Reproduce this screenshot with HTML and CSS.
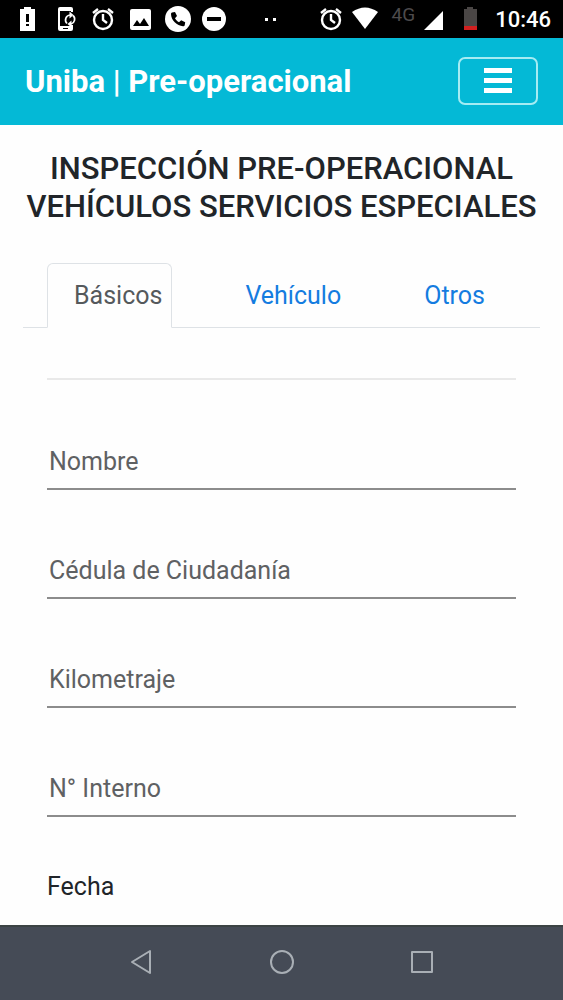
FILE: index.html
```html
<!DOCTYPE html>
<html lang="es">
<head>
<meta charset="utf-8">
<meta name="viewport" content="width=device-width, initial-scale=1">
<title>Uniba | Pre-operacional</title>
<link rel="stylesheet" href="styles.css">
</head>
<body>
<div class="status">
  <div class="status-left">
    <svg class="icon" viewBox="0 0 26 26" aria-hidden="true"><path fill="#fff" d="M5 3h4V1h7v2h4v22H5z"/><path fill="#000" d="M11 8h3v8h-3zM11 18h3v2h-3z"/></svg>
    <svg class="icon" viewBox="0 0 26 26" aria-hidden="true"><path fill="#fff" fill-rule="evenodd" d="M8 1h11a2 2 0 0 1 2 2v3h-2V5H8v15h11v-1h2v4a2 2 0 0 1-2 2H8a2 2 0 0 1-2-2V3a2 2 0 0 1 2-2zM11 22v1h5v-1z"/><path fill="none" stroke="#fff" stroke-width="1.700" d="M15 17.500a5 5 0 0 1 3-8.500M21 9.500a5 5 0 0 1-2 8.500"/><path fill="#fff" d="M17.500 5.500l4 3.500-4 3.500zM19.500 14.500v7l-4-3.500z"/></svg>
    <svg class="icon" viewBox="0 0 26 26" aria-hidden="true"><g fill="none" stroke="#fff" stroke-width="2.400"><circle cx="14" cy="14" r="9"/><path d="M14 8v6l4 3M4 7l5-4M24 7l-5-4"/></g></svg>
    <svg class="icon" viewBox="0 0 26 26" aria-hidden="true"><rect x="4" y="3" width="21" height="21" rx="2" fill="#fff"/><path fill="#000" d="M7 20l4-6 3 4 4-6 5 8z"/></svg>
    <svg class="icon phone" viewBox="0 0 26 26" aria-hidden="true"><circle cx="15" cy="13" r="13" fill="#fff"/><path fill="#000" d="M9 6.500l3-.5 2 4-2 2.200c1 1.800 2.200 3 4 4l2.200-2 4 2-.5 3c-.2.800-.8 1-1.700 1C14 20 8 14 8 8c0-.8.300-1.300 1-1.500z"/></svg>
    <svg class="icon" viewBox="0 0 26 26" aria-hidden="true"><circle cx="14" cy="13" r="12" fill="#fff"/><path fill="#000" d="M7 11h14v4H7z"/></svg>
    <svg class="icon dots" viewBox="0 0 26 26" aria-hidden="true"><path fill="#fff" d="M8 12h3v3H8zM16 12h3v3h-3z"/></svg>
  </div>
  <div class="status-right">
    <svg class="icon" viewBox="0 0 26 26" aria-hidden="true"><g fill="none" stroke="#fff" stroke-width="2.400"><circle cx="13" cy="14" r="9"/><path d="M13 8v6l4 3M3 7l5-4M23 7l-5-4"/></g></svg>
    <svg class="icon wifi" viewBox="0 0 26 26" aria-hidden="true"><path fill="#fff" d="M0 6Q13-3 26 6L13 23z"/></svg>
    <span class="network">4G</span>
    <svg class="icon" viewBox="0 0 26 26" aria-hidden="true"><path fill="#fff" d="M22 5v19H3z"/></svg>
    <svg class="icon battery" viewBox="0 0 26 26" aria-hidden="true"><path fill="#4a4645" d="M7 3h3V1h6v2h4v18H7z"/><path fill="#d21f1f" d="M7 20h13v4H7z"/></svg>
    <time class="clock">10:46</time>
  </div>
</div>

<header class="topbar">
  <a class="brand" href="#">Uniba | Pre-operacional</a>
  <button class="menu" type="button" aria-label="Menú">
    <svg class="menu-icon" viewBox="0 0 28 28" aria-hidden="true"><path fill="#fff" d="M0 1h28v5H0zM0 11h28v5H0zM0 21h28v5H0z"/></svg>
  </button>
</header>

<main class="page">
  <h1 class="title">INSPECCIÓN PRE-OPERACIONAL VEHÍCULOS SERVICIOS ESPECIALES</h1>
  <nav class="tabs">
    <a class="tab tab-active" href="#basicos">Básicos</a>
    <a class="tab" href="#vehiculo">Vehículo</a>
    <a class="tab" href="#otros">Otros</a>
  </nav>
  <form class="form" id="basicos">
    <hr class="rule">
    <input class="field" type="text" placeholder="Nombre" aria-label="Nombre">
    <input class="field" type="text" placeholder="Cédula de Ciudadanía" aria-label="Cédula de Ciudadanía">
    <input class="field" type="text" placeholder="Kilometraje" aria-label="Kilometraje">
    <input class="field" type="text" placeholder="N° Interno" aria-label="N° Interno">
    <p class="caption">Fecha</p>
  </form>
</main>

<footer class="softkeys">
  <button class="key" type="button" aria-label="Atrás"><svg class="key-icon" viewBox="0 0 26 26" aria-hidden="true"><path d="M22 2v22L4 13z"/></svg></button>
  <button class="key" type="button" aria-label="Inicio"><svg class="key-icon" viewBox="0 0 26 26" aria-hidden="true"><circle cx="13" cy="13" r="11"/></svg></button>
  <button class="key" type="button" aria-label="Recientes"><svg class="key-icon" viewBox="0 0 26 26" aria-hidden="true"><path d="M3 3h20v20H3z"/></svg></button>
</footer>
</body>
</html>
```

FILE: styles.css
```css
* {
  box-sizing: border-box;
}

body {
  margin: 0;
  min-height: 100vh;
  display: flex;
  flex-direction: column;
  background: #fefefe;
  color: #212529;
  font: 25px/37px Roboto, sans-serif;
}

.status {
  display: flex;
  justify-content: space-between;
  align-items: center;
  height: 38px;
  padding: 0 12px 0 15px;
  background: #000;
  color: #fff;
}

.status-left,
.status-right {
  display: flex;
  align-items: center;
}

.status-left {
  gap: 11px;
}

.icon {
  display: block;
  flex: none;
  width: 26px;
  height: 26px;
}

.phone {
  overflow: visible;
}

.dots {
  margin-left: 20px;
}

.wifi {
  margin: 0 14px 0 8px;
}

.network {
  margin-right: 6px;
  padding-bottom: 8px;
  color: #4d4b4c;
  font-size: 19px;
  line-height: 20px;
}

.battery {
  margin: 0 12px 0 10px;
}

.clock {
  font-size: 22px;
  font-weight: 500;
}

.topbar {
  display: flex;
  justify-content: space-between;
  align-items: center;
  padding: 19px 25px 20px;
  background: #04b9d6;
}

.brand {
  color: #fff;
  font-size: 31px;
  font-weight: 700;
  text-decoration: none;
}

.menu {
  display: flex;
  justify-content: center;
  align-items: center;
  width: 80px;
  height: 48px;
  padding: 0;
  border: 2px solid #a5ecf3;
  border-radius: 7px;
  background: none;
}

.menu-icon {
  width: 28px;
  height: 28px;
}

.page {
  flex: 1;
  padding: 25px 23px 0;
}

.title {
  margin: 0 0 37px;
  font-size: 31px;
  font-weight: 500;
  line-height: 38px;
  text-align: center;
}

.tabs {
  display: flex;
  gap: 46px;
  padding-left: 24px;
  border-bottom: 1px solid #dee2e6;
}

.tab {
  margin-bottom: -1px;
  padding: 13px 9px 13px 26px;
  border: 1px solid transparent;
  border-radius: 6px 6px 0 0;
  color: #147ce0;
  text-decoration: none;
}

.tab-active {
  border-color: #dee2e6 #dee2e6 #fefefe;
  color: #55595c;
}

.form {
  display: flex;
  flex-direction: column;
  padding: 50px 24px 0;
}

.rule {
  width: 100%;
  margin: 0 0 56px;
  border: 0;
  border-top: 2px solid #e9e9e9;
}

.field {
  width: 100%;
  height: 54px;
  margin: 0 0 55px;
  padding: 0 2px 2px;
  border: 0;
  border-bottom: 2px solid #8c8c8c;
  background: none;
  color: #212529;
  font: inherit;
}

.field::placeholder {
  color: #5f6163;
  opacity: 1;
}

.caption {
  margin: -4px 0 20px;
}

.softkeys {
  display: grid;
  grid-template-columns: repeat(3, 1fr);
  height: 75px;
  padding: 0 12.5% 3px;
  border-top: 2px solid #3c4344;
  background: #454b56;
}

.key {
  display: flex;
  justify-content: center;
  align-items: center;
  padding: 0;
  border: 0;
  background: none;
}

.key-icon {
  width: 26px;
  height: 26px;
  fill: none;
  stroke: #a9afb5;
  stroke-width: 2;
  stroke-linejoin: round;
}
```
